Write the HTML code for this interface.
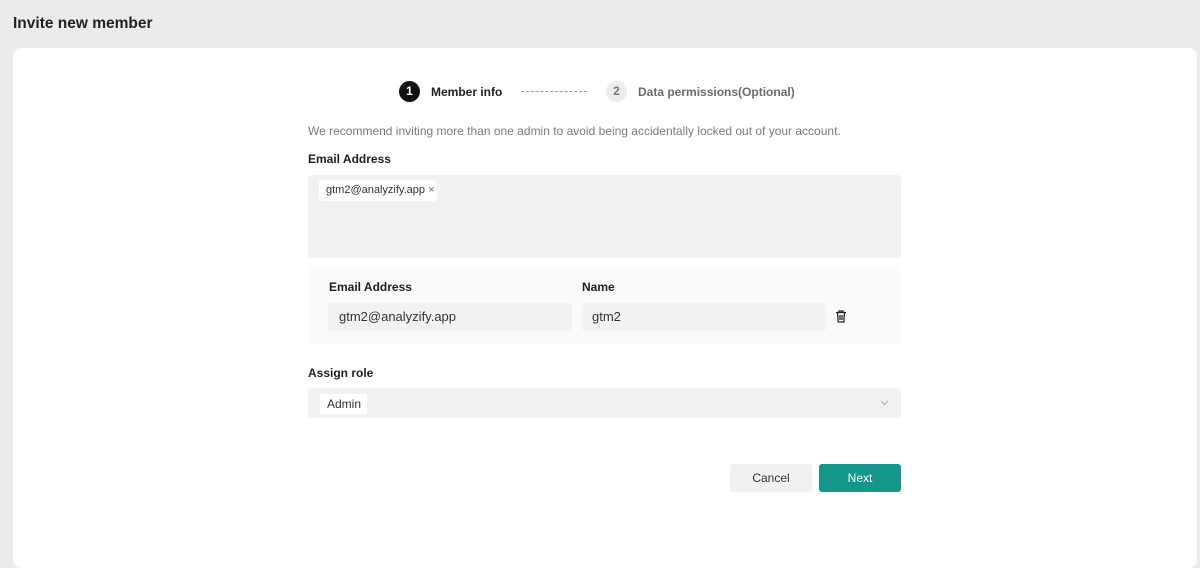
<!DOCTYPE html>
<html><head><style>
*{box-sizing:border-box;margin:0;padding:0}
body{width:1200px;height:548px;background:#ebebeb;font-family:"Liberation Sans",sans-serif;color:#1f1f1f;position:relative;overflow:hidden}
.a{position:absolute}
.card{left:13px;top:48px;width:1184px;height:520px;background:#fff;border-radius:8px}
.t{font-size:13px}
.b{font-weight:bold}
</style></head><body>
<div class="a" style="left:13px;top:15px;font-size:15.5px;font-weight:bold;color:#222">Invite new member</div>
<div class="a card"></div>
<div class="a" style="left:399px;top:81px;width:21px;height:21px;border-radius:50%;background:#111;color:#fff;font-size:12px;font-weight:bold;text-align:center;line-height:21px">1</div>
<div class="a t b" style="left:431px;top:85px;font-size:12px">Member info</div>
<div class="a" style="left:521px;top:91px;width:66px;border-top:1px dashed #999"></div>
<div class="a" style="left:606px;top:81px;width:21px;height:21px;border-radius:50%;background:#ececec;color:#777;font-size:12px;font-weight:bold;text-align:center;line-height:21px">2</div>
<div class="a b" style="left:638px;top:85px;font-size:12px;color:#6b6b6b">Data permissions(Optional)</div>
<div class="a" style="left:308px;top:124px;font-size:12px;color:#7a7a7a">We recommend inviting more than one admin to avoid being accidentally locked out of your account.</div>
<div class="a b" style="left:308px;top:152px;font-size:12px">Email Address</div>
<div class="a" style="left:308px;top:175px;width:593px;height:83px;background:#f1f2f1;border-radius:3px"></div>
<div class="a" style="left:319px;top:180px;width:118px;height:21px;background:#fff;border-radius:3px;font-size:11px;line-height:21px;padding-left:7px;color:#333">gtm2@analyzify.app <span style="color:#666">×</span></div>
<div class="a" style="left:308px;top:265px;width:593px;height:79px;background:#f9fafb;border-radius:3px"></div>
<div class="a b" style="left:329px;top:280px;font-size:12px">Email Address</div>
<div class="a b" style="left:582px;top:280px;font-size:12px">Name</div>
<div class="a" style="left:328px;top:303px;width:244px;height:28px;background:#f1f2f1;border-radius:3px;font-size:13px;line-height:28px;padding-left:11px;color:#333">gtm2@analyzify.app</div>
<div class="a" style="left:582px;top:303px;width:244px;height:28px;background:#f1f2f1;border-radius:3px;font-size:13px;line-height:28px;padding-left:10px;color:#333">gtm2</div>
<svg class="a" style="left:835px;top:310px" width="12" height="13" viewBox="0 0 12 13"><path d="M1 2.5h10M4 2.5V1h4v1.5M2.5 2.5l.7 9.5h5.6l.7-9.5M5 5v5M7 5v5" fill="none" stroke="#222" stroke-width="1.3"/></svg>
<div class="a b" style="left:308px;top:366px;font-size:12px">Assign role</div>
<div class="a" style="left:308px;top:388px;width:593px;height:30px;background:#f1f2f1;border-radius:3px"></div>
<div class="a" style="left:320px;top:394px;width:47px;height:20px;background:#fff;border-radius:2px;font-size:12px;line-height:20px;padding-left:7px;color:#333">Admin</div>
<svg class="a" style="left:880px;top:400px" width="9" height="6" viewBox="0 0 9 6"><path d="M1 1l3.5 3.5L8 1" fill="none" stroke="#aaa" stroke-width="1"/></svg>
<div class="a" style="left:730px;top:464px;width:82px;height:28px;background:#f0f1f0;border-radius:3px;font-size:12px;line-height:28px;text-align:center;color:#333">Cancel</div>
<div class="a" style="left:819px;top:464px;width:82px;height:28px;background:#15968a;border-radius:3px;font-size:12px;line-height:28px;text-align:center;color:#fff">Next</div>
</body></html>
